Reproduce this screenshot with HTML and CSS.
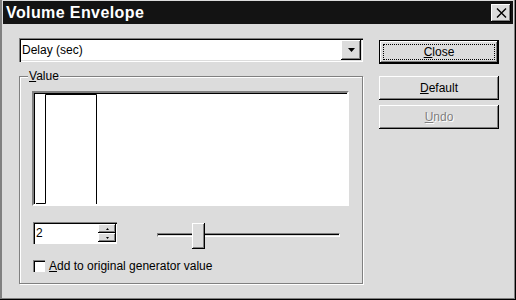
FILE: index.html
```html
<!DOCTYPE html>
<html>
<head>
    <title>Volume Envelope</title>
    <meta charset="UTF-8">
    <link rel="stylesheet" href="styles.css">
</head>
<body>
    <div class="window">
        <div class="title-bar">
            <span class="title">Volume Envelope</span>
            <button type="button" class="title-close">
                <svg width="11" height="10" viewBox="0 0 11 10">
                    <path d="M1 0.5 L10 9.5 M10 0.5 L1 9.5" stroke="#000" stroke-width="1.4" fill="none"/>
                </svg>
            </button>
        </div>

        <div class="content">
            <div class="left-col">
                <div class="combo">
                    <span class="combo-text">Delay (sec)</span>
                    <span class="combo-button">
                        <svg width="7" height="4" viewBox="0 0 7 4"><path d="M0 0 H7 L3.5 4 Z" fill="#000"/></svg>
                    </span>
                </div>

                <fieldset class="group">
                    <legend><u>V</u>alue</legend>

                    <div class="graph">
                        <svg width="313" height="111" viewBox="0 0 313 111">
                            <path d="M2 110.5 H11.5 V1.5 H62.5 V111" stroke="#000" stroke-width="1" fill="none"/>
                        </svg>
                    </div>

                    <div class="controls">
                        <div class="spin">
                            <span class="spin-text">2</span>
                            <span class="spin-buttons">
                                <span class="spin-btn">
                                    <svg width="3" height="2" viewBox="0 0 3 2"><path d="M1.5 0 L3 2 H0 Z" fill="#000"/></svg>
                                </span>
                                <span class="spin-btn">
                                    <svg width="3" height="2" viewBox="0 0 3 2"><path d="M0 0 H3 L1.5 2 Z" fill="#000"/></svg>
                                </span>
                            </span>
                        </div>

                        <div class="slider">
                            <div class="track"></div>
                            <div class="thumb" style="left: 35px;"></div>
                        </div>
                    </div>

                    <label class="check-row">
                        <span class="checkbox"></span>
                        <span><u>A</u>dd to original generator value</span>
                    </label>
                </fieldset>
            </div>

            <div class="right-col">
                <button type="button" class="btn btn-default"><span class="focus"><u>C</u>lose</span></button>
                <button type="button" class="btn btn-second"><u>D</u>efault</button>
                <button type="button" class="btn btn-third" disabled><u>U</u>ndo</button>
            </div>
        </div>
    </div>
</body>
</html>
```

FILE: styles.css
```css
body {
    margin: 0;
    background-color: #dcdcdc;
    font-family: "Liberation Sans", Arial, sans-serif;
    font-size: 12px;
    color: #000;
}

.window {
    width: 516px;
    height: 300px;
    box-sizing: border-box;
    padding: 1px 3px 3px 3px;
    background-color: #dcdcdc;
    box-shadow: inset -1px -1px #000, inset -2px -2px #808080, inset 2px 0 #808080;
    overflow: hidden;
}

.title-bar {
    height: 23px;
    background-color: #131313;
    display: flex;
    align-items: center;
    justify-content: space-between;
    padding: 0 2px 0 3px;
}

.title {
    color: #fff;
    font-weight: bold;
    font-size: 16px;
    letter-spacing: 0.4px;
}

.title-close {
    width: 20px;
    height: 18px;
    padding: 0;
    border: none;
    background-color: #dcdcdc;
    box-shadow: inset -1px -1px #000, inset 1px 1px #fff, inset -2px -2px #808080;
    display: flex;
    align-items: center;
    justify-content: center;
}

.content {
    display: flex;
    gap: 16px;
    padding: 14px 14px 0 16px;
}

.left-col {
    width: 344px;
}

.combo {
    height: 24px;
    box-sizing: border-box;
    background-color: #fff;
    box-shadow: inset 1px 1px #808080, inset 2px 2px #000, inset -1px -1px #fff, inset -2px -2px #dcdcdc;
    display: flex;
    align-items: center;
    justify-content: space-between;
    padding: 0 2px 0 3px;
}

.combo-button {
    width: 20px;
    height: 20px;
    background-color: #dcdcdc;
    box-shadow: inset -1px -1px #000, inset 1px 1px #fff, inset -2px -2px #808080;
    display: flex;
    align-items: center;
    justify-content: center;
}

.group {
    margin: 8px 0 0 0;
    padding: 8px 13px 10px 12px;
    border: 1px solid #808080;
    box-shadow: inset 1px 1px #fff, 1px 1px #fff;
    min-width: 0;
}

.group legend {
    margin-left: -4px;
    padding: 0 1px;
    line-height: 13px;
    background-color: #dcdcdc;
}

.graph {
    width: 317px;
    height: 115px;
    box-sizing: border-box;
    background-color: #fff;
    border: 2px solid;
    border-color: #808080 #fff #fff #808080;
    box-shadow: inset 1px 1px #000;
}

.graph svg {
    display: block;
}

.controls {
    display: flex;
    align-items: flex-start;
    gap: 40px;
    margin-top: 16px;
    margin-left: 1px;
}

.spin {
    width: 84px;
    height: 22px;
    box-sizing: border-box;
    background-color: #fff;
    box-shadow: inset 1px 1px #808080, inset 2px 2px #000, inset -1px -1px #fff;
    display: flex;
    justify-content: space-between;
    align-items: center;
    padding: 2px 1px 2px 3px;
}

.spin-buttons {
    display: flex;
    flex-direction: column;
    width: 18px;
    height: 18px;
}

.spin-btn {
    flex: 1;
    background-color: #dcdcdc;
    box-shadow: inset -1px -1px #000, inset 1px 1px #fff, inset -2px -2px #808080;
    display: flex;
    align-items: center;
    justify-content: center;
}

.slider {
    position: relative;
    width: 183px;
    height: 26px;
    margin-top: 1px;
}

.track {
    margin-top: 10px;
    height: 4px;
    box-sizing: border-box;
    border: 1px solid;
    border-color: #808080 #fff #fff #808080;
    background-color: #000;
    box-shadow: inset 0 -1px #dcdcdc;
}

.thumb {
    position: absolute;
    top: 0;
    width: 13px;
    height: 26px;
    box-sizing: border-box;
    background-color: #dcdcdc;
    box-shadow: inset -1px -1px #000, inset 1px 1px #fff, inset -2px -2px #808080;
}

.check-row {
    display: flex;
    align-items: center;
    gap: 4px;
    margin-top: 10px;
    margin-left: 1px;
}

.checkbox {
    width: 12px;
    height: 12px;
    box-sizing: border-box;
    background-color: #fff;
    box-shadow: inset 1px 1px #808080, inset 2px 2px #000, inset -1px -1px #fff;
}

.right-col {
    display: flex;
    flex-direction: column;
    width: 120px;
    padding-top: 2px;
}

.btn {
    height: 24px;
    padding: 0;
    border: none;
    background-color: #dcdcdc;
    font-family: "Liberation Sans", Arial, sans-serif;
    font-size: 12px;
    color: #000;
    box-shadow: inset -1px -1px #000, inset 1px 1px #fff, inset -2px -2px #808080;
}

.btn-default {
    box-shadow: inset 0 0 0 1px #000, inset -2px -2px #000, inset 2px 2px #fff, inset -3px -3px #808080;
    display: flex;
    padding: 4px;
}

.btn-default .focus {
    flex: 1;
    border: 1px dotted #000;
    display: flex;
    align-items: center;
    justify-content: center;
}

.btn-second {
    margin-top: 12px;
}

.btn-third {
    margin-top: 5px;
    color: #808080;
    text-shadow: 1px 1px #fff;
}
```
